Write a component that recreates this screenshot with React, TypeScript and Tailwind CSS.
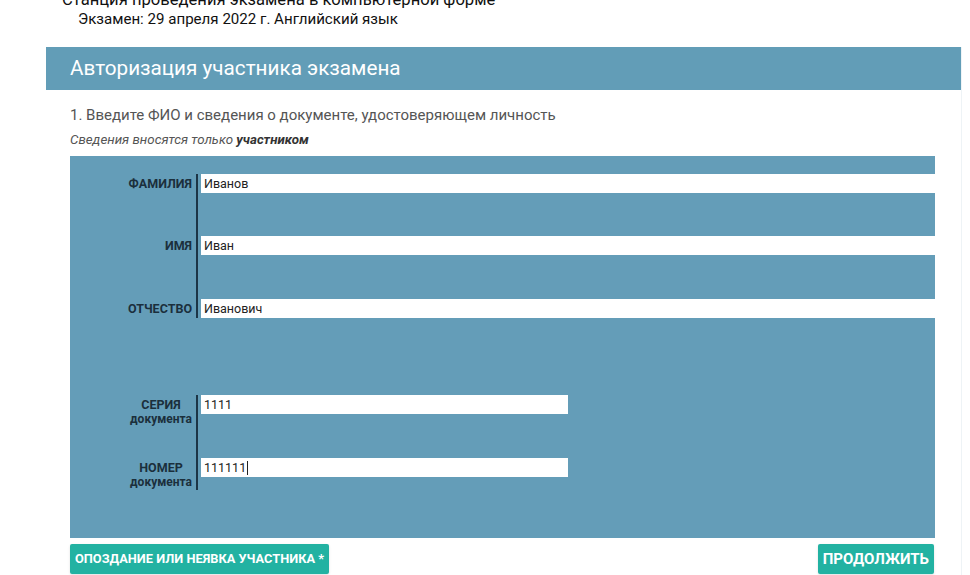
import React from "react";

function Row({
  label,
  sub,
  value,
  h,
  w,
  caret,
}: {
  label: string;
  sub?: string;
  value: string;
  h: string;
  w: string;
  caret?: boolean;
}) {
  return (
    <div className={`flex ${h}`}>
      <div className="w-[126px] pr-[4px] text-right text-[12.5px] font-bold leading-[15px] text-[#1b2f3c] pt-[2px]">
        <div className="inline-block text-center">
          <div>{label}</div>
          {sub && <div className="text-[12px]">{sub}</div>}
        </div>
      </div>
      <div className="flex-1 border-l-2 border-[#1c3546] pl-[3px]">
        <div
          className={`${w} h-[19px] bg-white text-[12.5px] leading-[19px] pl-[3px] text-[#222] flex items-center`}
        >
          <span>{value}</span>
          {caret && <span className="w-px h-[14px] bg-[#222] ml-[1px]" />}
        </div>
      </div>
    </div>
  );
}

export default function App() {
  return (
    <div
      className="w-[970px] h-[575px] overflow-hidden bg-white relative"
      style={{ fontFamily: "Roboto, 'Noto Sans', sans-serif" }}
    >
      <div className="pl-[62px] mt-[-10px] text-[16.6px] leading-[20px] text-[#111]">
        Станция проведения экзамена в компьютерной форме
      </div>
      <div className="pl-[78px] text-[15.1px] leading-[19px] text-[#111]">
        Экзамен: 29 апреля 2022 г. Английский язык
      </div>
      <div className="ml-[46px] w-[916px] mt-[18px] border-r border-[#eef3f6] h-[600px]">
        <div className="h-[43px] bg-[#629db7] flex items-center pl-[24px] text-white text-[20.7px]">
          Авторизация участника экзамена
        </div>
        <div className="pl-[24px] pt-[16px] text-[15px] leading-[18px] text-[#555]">
          1. Введите ФИО и сведения о документе, удостоверяющем личность
        </div>
        <div className="pl-[24px] pt-[8px] text-[13.3px] leading-[15px] italic text-[#555]">
          Сведения вносятся только <b className="text-[#333]">участником</b>
        </div>
        <div className="ml-[24px] mr-[26px] mt-[9px] h-[382px] bg-[#649db8] pt-[18px]">
          <Row label="ФАМИЛИЯ" value="Иванов" h="h-[62px]" w="w-full" />
          <Row label="ИМЯ" value="Иван" h="h-[63px]" w="w-full" />
          <Row label="ОТЧЕСТВО" value="Иванович" h="h-[19px]" w="w-full" />
          <div className="h-[77px]" />
          <Row label="СЕРИЯ" sub="документа" value="1111" h="h-[63px]" w="w-[367px]" />
          <Row label="НОМЕР" sub="документа" value="111111" h="h-[32px]" w="w-[367px]" caret />
        </div>
        <div className="ml-[24px] mr-[27px] mt-[6px] flex justify-between">
          <button className="h-[30px] px-[5px] bg-[#22b2a2] text-white text-[12.8px] font-bold rounded-[2px] shadow-sm">
            ОПОЗДАНИЕ ИЛИ НЕЯВКА УЧАСТНИКА *
          </button>
          <button className="h-[30px] px-[5px] bg-[#22b2a2] text-white text-[15px] font-bold rounded-[2px] shadow-sm">
            ПРОДОЛЖИТЬ
          </button>
        </div>
      </div>
    </div>
  );
}
